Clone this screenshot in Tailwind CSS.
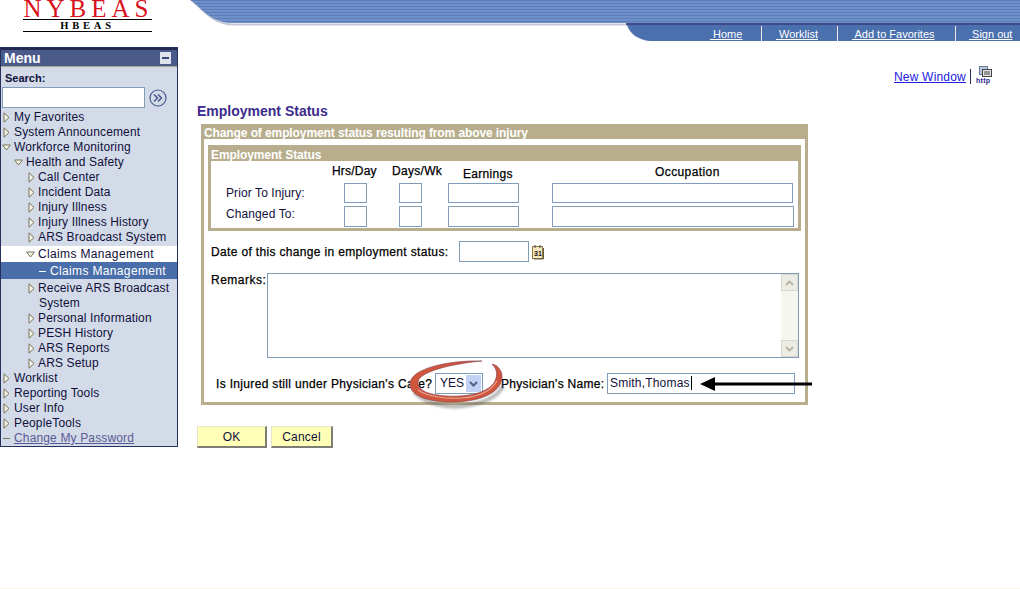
<!DOCTYPE html>
<html>
<head>
  <meta charset="UTF-8" />
  <title>Employment Status</title>
  <script src="https://cdn.jsdelivr.net/npm/@tailwindcss/browser@4"></script>
</head>
<body class="relative w-[1020px] h-[589px] overflow-hidden bg-white font-['Liberation_Sans',Arial,sans-serif] text-[12px] leading-[15px] text-[#10103a]">

  <!-- header -->
  <header class="relative h-[47px] overflow-hidden">
    <div class="absolute left-[23px] top-0 w-[131px] text-center font-['Liberation_Serif',serif] text-[25px] leading-[17px] tracking-[5px] text-[#d8121e] whitespace-nowrap">NYBEAS</div>
    <div class="absolute left-[23px] top-[19px] w-[129px] h-[13px] border-y border-black text-center font-['Liberation_Serif',serif] font-bold text-[10.5px] leading-[11px] tracking-[3.8px] text-black">HBEAS</div>
    <svg class="absolute left-0 top-0" width="1020" height="47" viewBox="0 0 1020 47" fill="none">
      <defs>
        <pattern id="stripes" width="3" height="3" patternUnits="userSpaceOnUse">
          <rect width="3" height="3" fill="#6f8fc8" />
          <rect width="3" height="1" fill="#5d7dba" />
        </pattern>
      </defs>
      <path d="M191 0 C201 6 209 23 232 24.500 H640" stroke="#c4c8d4" stroke-width="2" />
      <path d="M190 0 C200 6 208 21 230 23 L1020 23 L1020 0 Z" fill="url(#stripes)" />
      <rect x="626" y="23" width="394" height="2" fill="#3f4a8c" />
      <path d="M627 25 L1020 25 L1020 41 L650 41 C638 40 630 34 627 25 Z" fill="#4a70ae" />
    </svg>
    <nav class="absolute left-[700px] top-[26px] h-[15px] flex text-[11px] leading-[16px] text-white">
      <a class="w-[61px] pl-[10px] underline whitespace-pre" href="#"> Home</a>
      <span class="w-[1px] h-[15px] bg-[#f4e4ee]"></span>
      <a class="w-[75px] pl-[14px] underline whitespace-pre" href="#"> Worklist</a>
      <span class="w-[1px] h-[15px] bg-[#f4e4ee]"></span>
      <a class="w-[117px] pl-[14px] underline whitespace-pre" href="#"> Add to Favorites</a>
      <span class="w-[1px] h-[15px] bg-[#f4e4ee]"></span>
      <a class="w-[64px] pl-[13px] underline whitespace-pre" href="#"> Sign out</a>
    </nav>
  </header>

  <div class="flex items-start">
    <!-- menu -->
    <aside class="w-[178px] h-[400px] border border-[#26305e] bg-[#d3dbe9]">
      <div class="h-[19px] border-t-2 border-[#23294f] border-b border-b-[#a9a690] bg-[#4a5a8b] flex items-center justify-between pl-[3px] pr-[6px]">
        <span class="font-bold text-[14px] text-white">Menu</span>
        <span class="w-[11px] h-[12px] bg-[#dfe3ee] flex items-center justify-center"><span class="w-[7px] h-[2px] bg-[#3a4a7c]"></span></span>
      </div>
      <div class="px-[4px] pt-[4px] h-[15px] box-content font-bold text-[11px]">Search:</div>
      <div class="flex items-center pl-[1px] mt-[1px] h-[21px]">
        <div class="w-[143px] h-[21px] bg-white border border-[#7f9db9]"></div>
        <svg class="ml-[4px]" width="18" height="18" viewBox="0 0 18 18" fill="none" stroke="#4a5a8b">
          <circle cx="9" cy="9" r="8" stroke-width="1.2" />
          <path d="M5 5.500 L8.500 9 L5 12.500 M9 5.500 L12.500 9 L9 12.500" stroke-width="1.500" />
        </svg>
      </div>
      <ul class="mt-[2px] tracking-[0.15px]">
        <li class="h-[15px] flex items-center pl-[2px]"><svg class="mr-[4px]" width="7" height="11" viewBox="0 0 7 11"><path d="M1 .8 L6 5.500 L1 10.200 Z" fill="#f3f3e6" stroke="#77735a" /></svg>My Favorites</li>
        <li class="h-[15px] flex items-center pl-[2px]"><svg class="mr-[4px]" width="7" height="11" viewBox="0 0 7 11"><path d="M1 .8 L6 5.500 L1 10.200 Z" fill="#f3f3e6" stroke="#77735a" /></svg>System Announcement</li>
        <li class="h-[15px] flex items-center pl-[1px]"><svg class="mr-[3px]" width="9" height="7" viewBox="0 0 9 7"><path d="M.6 1 L8.400 1 L4.500 6 Z" fill="#f3f3e6" stroke="#77735a" /></svg>Workforce Monitoring</li>
        <li class="h-[15px] flex items-center pl-[13px]"><svg class="mr-[3px]" width="9" height="7" viewBox="0 0 9 7"><path d="M.6 1 L8.400 1 L4.500 6 Z" fill="#f3f3e6" stroke="#77735a" /></svg>Health and Safety</li>
        <li class="h-[15px] flex items-center pl-[27px]"><svg class="mr-[3px]" width="7" height="11" viewBox="0 0 7 11"><path d="M1 .8 L6 5.500 L1 10.200 Z" fill="#f3f3e6" stroke="#77735a" /></svg>Call Center</li>
        <li class="h-[15px] flex items-center pl-[27px]"><svg class="mr-[3px]" width="7" height="11" viewBox="0 0 7 11"><path d="M1 .8 L6 5.500 L1 10.200 Z" fill="#f3f3e6" stroke="#77735a" /></svg>Incident Data</li>
        <li class="h-[15px] flex items-center pl-[27px]"><svg class="mr-[3px]" width="7" height="11" viewBox="0 0 7 11"><path d="M1 .8 L6 5.500 L1 10.200 Z" fill="#f3f3e6" stroke="#77735a" /></svg>Injury Illness</li>
        <li class="h-[15px] flex items-center pl-[27px]"><svg class="mr-[3px]" width="7" height="11" viewBox="0 0 7 11"><path d="M1 .8 L6 5.500 L1 10.200 Z" fill="#f3f3e6" stroke="#77735a" /></svg>Injury Illness History</li>
        <li class="h-[15px] flex items-center pl-[27px]"><svg class="mr-[3px]" width="7" height="11" viewBox="0 0 7 11"><path d="M1 .8 L6 5.500 L1 10.200 Z" fill="#f3f3e6" stroke="#77735a" /></svg>ARS Broadcast System</li>
        <li class="h-[16px] mt-[1px] flex items-center pl-[25px] bg-white tracking-[0.35px]"><svg class="mr-[3px]" width="9" height="7" viewBox="0 0 9 7"><path d="M.6 1 L8.400 1 L4.500 6 Z" fill="#f3f3e6" stroke="#77735a" /></svg>Claims Management</li>
        <li class="h-[17px] pt-[1px] flex items-center pl-[38px] bg-[#4a6ea9] text-white tracking-[0.35px]"><span class="w-[7px] h-[1px] bg-white mr-[4px]"></span>Claims Management</li>
        <li class="pl-[27px] mt-[2px] h-[30px]"><span class="flex items-center h-[15px]"><svg class="mr-[3px]" width="7" height="11" viewBox="0 0 7 11"><path d="M1 .8 L6 5.500 L1 10.200 Z" fill="#f3f3e6" stroke="#77735a" /></svg>Receive ARS Broadcast</span><span class="block pl-[11px]">System</span></li>
        <li class="h-[15px] flex items-center pl-[27px]"><svg class="mr-[3px]" width="7" height="11" viewBox="0 0 7 11"><path d="M1 .8 L6 5.500 L1 10.200 Z" fill="#f3f3e6" stroke="#77735a" /></svg>Personal Information</li>
        <li class="h-[15px] flex items-center pl-[27px]"><svg class="mr-[3px]" width="7" height="11" viewBox="0 0 7 11"><path d="M1 .8 L6 5.500 L1 10.200 Z" fill="#f3f3e6" stroke="#77735a" /></svg>PESH History</li>
        <li class="h-[15px] flex items-center pl-[27px]"><svg class="mr-[3px]" width="7" height="11" viewBox="0 0 7 11"><path d="M1 .8 L6 5.500 L1 10.200 Z" fill="#f3f3e6" stroke="#77735a" /></svg>ARS Reports</li>
        <li class="h-[15px] flex items-center pl-[27px]"><svg class="mr-[3px]" width="7" height="11" viewBox="0 0 7 11"><path d="M1 .8 L6 5.500 L1 10.200 Z" fill="#f3f3e6" stroke="#77735a" /></svg>ARS Setup</li>
        <li class="h-[15px] flex items-center pl-[2px]"><svg class="mr-[4px]" width="7" height="11" viewBox="0 0 7 11"><path d="M1 .8 L6 5.500 L1 10.200 Z" fill="#f3f3e6" stroke="#77735a" /></svg>Worklist</li>
        <li class="h-[15px] flex items-center pl-[2px]"><svg class="mr-[4px]" width="7" height="11" viewBox="0 0 7 11"><path d="M1 .8 L6 5.500 L1 10.200 Z" fill="#f3f3e6" stroke="#77735a" /></svg>Reporting Tools</li>
        <li class="h-[15px] flex items-center pl-[2px]"><svg class="mr-[4px]" width="7" height="11" viewBox="0 0 7 11"><path d="M1 .8 L6 5.500 L1 10.200 Z" fill="#f3f3e6" stroke="#77735a" /></svg>User Info</li>
        <li class="h-[15px] flex items-center pl-[2px]"><svg class="mr-[4px]" width="7" height="11" viewBox="0 0 7 11"><path d="M1 .8 L6 5.500 L1 10.200 Z" fill="#f3f3e6" stroke="#77735a" /></svg>PeopleTools</li>
        <li class="h-[15px] flex items-center pl-[2px] text-[#5a5a94]"><span class="w-[7px] h-[1px] bg-[#77735a] mr-[4px]"></span><a class="underline" href="#">Change My Password</a></li>
      </ul>
    </aside>

    <!-- content -->
    <main class="w-[842px] pl-[19px]">
      <div class="h-[56px] flex justify-end items-start pr-[26px] pt-[19px]">
        <a class="underline text-[#2020e0] leading-[22px] tracking-[0.2px]" href="#">New Window</a>
        <span class="w-[1px] h-[15px] mt-[3px] mx-[4px] bg-[#26305e]"></span>
        <svg class="ml-[1px]" width="18" height="20" viewBox="0 0 18 20">
          <rect x="3.500" y=".5" width="8" height="8" fill="#b8c6e0" stroke="#6d7d99" />
          <rect x="6.500" y="3.500" width="9" height="7" fill="#e4e4e4" stroke="#444" />
          <path d="M8 6h6M8 8h6" stroke="#444" />
          <text x="0" y="16.500" font-size="7" font-weight="700" letter-spacing=".3" font-family="Liberation Sans" fill="#2a2a90">http</text>
        </svg>
      </div>
      <h1 class="font-bold text-[14px] leading-[16px] text-[#3a2b8c] h-[21px]">Employment Status</h1>

      <section class="ml-[4px] w-[607px] h-[281px] border-[3px] border-t-0 border-[#b8ae8e]">
        <div class="h-[15px] -mx-[1px] pl-[1px] bg-[#b8ae8e] font-bold text-white leading-[18px] tracking-[-0.1px]">Change of employment status resulting from above injury</div>

        <div class="ml-[4px] mt-[6px] w-[593px] h-[86px] border-[3px] border-t-0 border-[#b8ae8e]">
          <div class="h-[16px] -mx-[1px] pl-[1px] bg-[#b8ae8e] font-bold text-white leading-[20px] tracking-[-0.1px]">Employment Status</div>
          <div class="grid grid-cols-[133px_23px_32px_23px_26px_71px_33px_242px] grid-rows-[22px_20px_3px_21px] items-center">
            <span class="col-start-1 col-end-3 pl-[121px] tracking-[0.2px] [-webkit-text-stroke:0.25px_black] whitespace-nowrap text-black -mt-[2px]">Hrs/Day</span>
            <span class="col-start-4 -ml-[7px] tracking-[0.3px] [-webkit-text-stroke:0.25px_black] whitespace-nowrap text-black -mt-[2px]">Days/Wk</span>
            <span class="col-start-6 pl-[15px] whitespace-nowrap tracking-[0.3px] [-webkit-text-stroke:0.25px_black] text-black mt-[4px]">Earnings</span>
            <span class="col-start-8 pl-[103px] tracking-[0.4px] [-webkit-text-stroke:0.25px_black] text-black">Occupation</span>

            <span class="row-start-2 col-start-1 pl-[15px] tracking-[0.1px]">Prior To Injury:</span>
            <div class="row-start-2 col-start-2 h-[20px] border border-[#7f9db9]"></div>
            <div class="row-start-2 col-start-4 h-[20px] border border-[#7f9db9]"></div>
            <div class="row-start-2 col-start-6 h-[20px] border border-[#7f9db9]"></div>
            <div class="row-start-2 col-start-8 h-[20px] w-[241px] border border-[#7f9db9]"></div>

            <span class="row-start-4 col-start-1 pl-[15px] -mt-[4px] tracking-[0.1px]">Changed To:</span>
            <div class="row-start-4 col-start-2 h-[21px] border border-[#7f9db9]"></div>
            <div class="row-start-4 col-start-4 h-[21px] border border-[#7f9db9]"></div>
            <div class="row-start-4 col-start-6 h-[21px] border border-[#7f9db9]"></div>
            <div class="row-start-4 col-start-8 h-[21px] border border-[#7f9db9]"></div>
          </div>
        </div>

        <div class="mt-[10px] h-[21px] flex items-center pl-[7px]">
          <span class="w-[248px] pt-[1px] tracking-[0.34px] [-webkit-text-stroke:0.25px_black] text-black whitespace-nowrap">Date of this change in employment status:</span>
          <div class="w-[70px] h-[21px] border border-[#7f9db9]"></div>
          <svg class="ml-[3px]" width="12" height="16" viewBox="0 0 12 16">
            <rect x=".5" y="2.500" width="10" height="12" fill="#f6e8bc" stroke="#8a7a4a" />
            <path d="M11.500 4v11H2" stroke="#6a5c3a" fill="none" />
            <path d="M3 1v3M8 1v3" stroke="#444" />
            <text x="2" y="12" font-size="7" font-weight="700" font-family="Liberation Sans" fill="#111">31</text>
          </svg>
        </div>

        <div class="mt-[11px] flex pl-[7px]">
          <span class="w-[56px] tracking-[0.5px] [-webkit-text-stroke:0.25px_black] text-black">Remarks:</span>
          <div class="w-[532px] h-[85px] border border-[#7f9db9] flex justify-end">
            <div class="w-[17px] h-full bg-[#f6f6f1] flex flex-col justify-between">
              <div class="h-[17px] border border-[#d8d8ce] bg-[#ecece4] flex items-center justify-center">
                <svg width="9" height="6" viewBox="0 0 9 6" fill="none" stroke="#b5b5a8" stroke-width="2"><path d="M1 5 L4.500 1.500 L8 5" /></svg>
              </div>
              <div class="h-[17px] border border-[#d8d8ce] bg-[#ecece4] flex items-center justify-center">
                <svg width="9" height="6" viewBox="0 0 9 6" fill="none" stroke="#b5b5a8" stroke-width="2"><path d="M1 1 L4.500 4.500 L8 1" /></svg>
              </div>
            </div>
          </div>
        </div>

        <div class="mt-[15px] h-[21px] flex items-center pl-[12px]">
          <span class="w-[219px] pt-[1px] tracking-[0.33px] [-webkit-text-stroke:0.25px_black] text-black whitespace-nowrap">Is Injured still under Physician's Care?</span>
          <div class="w-[48px] h-[21px] border border-[#7f9db9] flex items-center justify-between pl-[4px] pr-[1px]">
            <span>YES</span>
            <span class="w-[15px] h-[17px] bg-[#c1d2f5] flex items-center justify-center">
              <svg width="9" height="6" viewBox="0 0 9 6" fill="none" stroke="#4d6185" stroke-width="2"><path d="M1 1 L4.500 4.500 L8 1" /></svg>
            </span>
          </div>
          <span class="ml-[18px] w-[106px] pt-[1px] tracking-[0.3px] [-webkit-text-stroke:0.25px_black] text-black whitespace-nowrap">Physician's Name:</span>
          <div class="w-[188px] h-[21px] border border-[#7f9db9] pl-[2px] leading-[19px] tracking-[0.2px]">Smith,Thomas</div>
        </div>
      </section>

      <div class="mt-[21px] flex gap-[4px]">
        <button class="w-[70px] h-[22px] pt-[1px] bg-[#ffffb8] border-r-2 border-b-2 border-[#7d7d75] border-t border-l border-t-[#e4e4c8] border-l-[#e4e4c8] text-[#10103a]">OK</button>
        <button class="w-[62px] h-[22px] pt-[1px] tracking-[0.2px] bg-[#ffffb8] border-r-2 border-b-2 border-[#7d7d75] border-t border-l border-t-[#e4e4c8] border-l-[#e4e4c8] text-[#10103a]">Cancel</button>
      </div>
    </main>
  </div>

  <!-- annotations over the form -->
  <svg class="absolute left-0 top-0 pointer-events-none" width="1020" height="589" viewBox="0 0 1020 589" fill="none">
    <defs>
      <filter id="soft" x="-20%" y="-200%" width="140%" height="500%"><feGaussianBlur stdDeviation="1.800" /></filter>
    </defs>
    <path d="M414 392 C425 403 445 408 462 406 C480 404 497 398 503 386" stroke="#555" stroke-width="3.500" opacity="0.5" filter="url(#soft)" />
    <path d="M482 361 C450 360 410 368 410 384 C410 397 432 403 456 402 C482 401 503 392 502 375 C501 369 497 365 492 364 C498 370 498 377 493 384 C485 394 465 397 447 396 C430 395 417 391 418 382 C419 372 450 364 482 361 Z" fill="#d0553d" stroke="#7a3f50" stroke-width=".6" />
    <path d="M418 390 C428 397 447 399 462 398 C478 397 491 391 497 381" stroke="#eaa595" stroke-width="1.200" />
    <path d="M704 388 H817" stroke="#555" stroke-width="3" opacity="0.55" filter="url(#soft)" />
    <path d="M712 384 H812" stroke="#000" stroke-width="3" />
    <path d="M700 384 L715 377 V391 Z" fill="#000" />
    <path d="M691.500 376 V390" stroke="#000" />
  </svg>

  <div class="absolute left-0 right-0 bottom-0 h-[1px] bg-[#f8f6e8]"></div>
</body>
</html>
